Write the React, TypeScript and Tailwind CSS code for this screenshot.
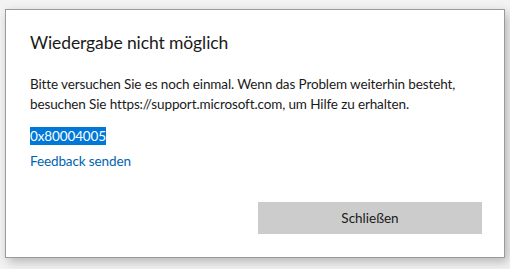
export default function App() {
  return (
    <div className="w-[510px] h-[269px] bg-[#f3f3f3] pt-[9px] pl-[5px] font-['Segoe_UI','Lato',sans-serif]">
      <div className="w-[500px] h-[249px] bg-white border border-[#9a9a9a] shadow-[3px_4px_10px_rgba(0,0,0,0.25)] flex flex-col pl-[24px] pr-[10px]">
        {/* Titel */}
        <h1 className="mt-[21px] text-[17.5px] leading-[24px] tracking-[-0.1px] text-[#1a1a1a]">Wiedergabe nicht möglich</h1>

        {/* Meldung */}
        <p className="mt-[19px] text-[13.5px] leading-[20px] tracking-[-0.12px] text-[#1a1a1a] whitespace-nowrap">
          Bitte versuchen Sie es noch einmal. Wenn das Problem weiterhin besteht,
          <br />
          besuchen Sie https://support.microsoft.com, um Hilfe zu erhalten.
        </p>

        <div className="mt-[13px] text-[13.5px] leading-[18px] tracking-[-0.12px]">
          <span className="bg-[#0078d7] text-white inline-block h-[18px]">0x80004005</span>
        </div>

        <a className="mt-[6px] text-[13.5px] leading-[20px] tracking-[-0.12px] text-[#0063b1] w-fit">Feedback senden</a>

        <div className="flex-1" />

        <div className="flex justify-end pb-[23px] pr-[12px]">
          <button className="w-[224px] h-[32px] bg-[#cccccc] text-[13.5px] text-[#1a1a1a]">Schließen</button>
        </div>
      </div>
    </div>
  )
}
